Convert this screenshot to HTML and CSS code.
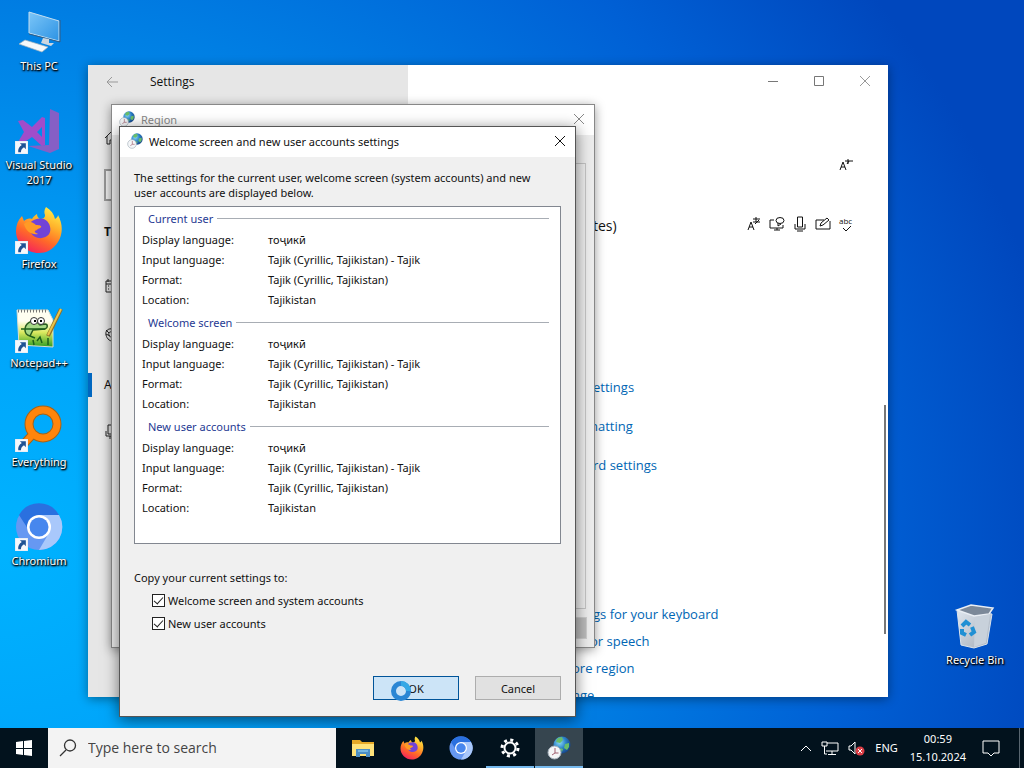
FILE: index.html
```html
<!DOCTYPE html>
<html lang="en">
<head>
<meta charset="utf-8">
<title>Desktop</title>
<link rel="stylesheet" href="styles.css">
</head>
<body>
<svg class="defs" aria-hidden="true">
  <defs>
    <linearGradient id="screenFill" x1="0" y1="0" x2="1" y2="1"><stop offset="0" stop-color="#7cc6f8"/><stop offset="1" stop-color="#2d93e4"/></linearGradient>
    <linearGradient id="foxFill" x1=".8" y1="0" x2=".3" y2="1"><stop offset="0" stop-color="#fff04a"/><stop offset=".35" stop-color="#ffb02a"/><stop offset=".65" stop-color="#ff6a28"/><stop offset="1" stop-color="#f5205e"/></linearGradient>
    <radialGradient id="globeFill" cx=".35" cy=".35" r=".75"><stop offset="0" stop-color="#8cdcf6"/><stop offset=".5" stop-color="#2a80c8"/><stop offset="1" stop-color="#123a7c"/></radialGradient>
    <linearGradient id="binFill" x1="0" y1="0" x2="1" y2="1"><stop offset="0" stop-color="#dfe6ee"/><stop offset="1" stop-color="#a3acb8"/></linearGradient>
    <linearGradient id="grassFill" x1="0" y1="0" x2="0" y2="1"><stop offset=".3" stop-color="#fffef0"/><stop offset=".6" stop-color="#dcea60"/><stop offset="1" stop-color="#2f9d23"/></linearGradient>
    <symbol id="shortcut" viewBox="0 0 12 12"><path fill="#f6f8fc" stroke="#c8d4e4" stroke-width=".5" d="M0 0h12v12H0z"/><path fill="#1f5294" d="M4.500 2H10v5.500L8.300 5.800C6.500 7 5.500 8.200 5.500 10.300H3C2.500 7.500 4 5.200 6.300 3.800z"/></symbol>
    <symbol id="firefox" viewBox="0 0 48 48"><path fill="url(#foxFill)" d="M31 1c5 3 8 7 9 12 2-1 3-3 3-4 5 9 5 19 0 27C38 44 31 47 24 47 11 47 1 37 1 25c0-6 2-11 6-15l2 5c2-2 5-3 8-2 1-2 3-4 5-5 0 2 1 4 3 5 3 0 5-1 5-4-1-2-1-5 1-8z"/><path fill="#7143d7" d="M15 17c4-5 13-6 17-2s5 12 0 15c-6 4-13 2-16-3l6-3c2-2 0-4-3-4l-5 1z"/><path fill="#ff9b25" d="M9 18c4-4 9-2 12 1 4 0 6 1 5 2-1 2-5 2-6 3-1 2 1 3 3 4-6 1-12-2-14-10z"/></symbol>
    <symbol id="chromium" viewBox="0 0 48 48"><circle cx="24" cy="24" r="23" fill="#6698f2"/><path fill="#2a70df" d="M4 12a23 23 0 0 1 40 0H24L15 29z"/><path fill="#a9c8fb" d="M24 12h20a23 23 0 0 1-20 35l10-17z"/><circle cx="24" cy="24" r="12" fill="#fff"/><circle cx="24" cy="24" r="9.500" fill="#4787ee"/></symbol>
    <symbol id="region" viewBox="0 0 24 24"><circle cx="15" cy="9" r="8.500" fill="url(#globeFill)"/><path fill="#69bd6a" d="M11 2l4-1 1 3-3 3-4-1 1-3zM18 8l4-1 0 4-2 3-3-2zM13 12l3 1-1 3z"/><circle cx="7.500" cy="16.500" r="6.500" fill="#f4f6f8" stroke="#a8b3bd"/><path fill="none" stroke="#a06070" d="M8 12v5h3.500M5 19l3-2"/></symbol>
  </defs>
</svg>
<main class="desktop">
  <nav class="shortcuts" aria-label="Desktop shortcuts">
    <a class="shortcut" href="#"><svg class="big" viewBox="0 0 48 48"><path fill="url(#screenFill)" stroke="#c4def0" stroke-width="1" d="M14 4l30 9v20L14 25z"/><path fill="none" stroke="#345d84" d="M45 12v22L14 26"/><path fill="#cbd6df" d="M28 30l6 1v4h5l-3 3-10-3z"/><path fill="#f4f8fa" stroke="#9db0bd" stroke-width=".7" d="M10 32l23 7-6 5-23-8z"/></svg><span>This PC</span></a>
    <a class="shortcut" href="#"><svg class="big" viewBox="0 0 48 48"><path fill="#865fc5" d="M35 2l9 4v36l-9 4-22-7 21-1z"/><path fill="#a04dca" fill-rule="evenodd" d="M3 14l5-1 9 7L27 10l3 1v27l-3 1-10-9-9 6-5-1 6-10zm24 6l-5 5 5 5z"/><use href="#shortcut" x="0" y="34" width="13" height="13"/></svg><span>Visual Studio 2017</span></a>
    <a class="shortcut" href="#"><svg class="big" viewBox="0 0 48 48"><use href="#firefox" width="48" height="48"/><use href="#shortcut" x="0" y="35" width="13" height="13"/></svg><span>Firefox</span></a>
    <a class="shortcut" href="#"><svg class="big" viewBox="0 0 48 48"><path fill="url(#grassFill)" stroke="#d9ddd0" d="M2 5h31l5 10v27L4 40z"/><path fill="none" stroke="#777" stroke-dasharray="1 2" stroke-width="3" d="M3 6h29"/><path fill="#a5d887" stroke="#285d20" stroke-width="1.500" d="M10 25c0-7 6-10 12-8l3 3 5-1c3 0 3 4 0 5l-12 1-3 6c-4-1-5-3-5-6z"/><path fill="none" stroke="#1b601b" stroke-width="1.500" d="M6 24h24M15 31l5 2M22 36l3-4 2 6M19 40l-1-5M33 40v-7"/><circle cx="19" cy="16" r="3.500" fill="#fff" stroke="#333"/><circle cx="26" cy="16" r="3.500" fill="#fff" stroke="#333"/><path d="M19 15h2v2h-2zM25 15h2v2h-2z"/><path stroke="#92702a" stroke-width="4" d="M33 31L46 4"/><path stroke="#e9c64d" stroke-width="2" d="M33 30L46 4"/><use href="#shortcut" x="0" y="35" width="13" height="13"/></svg><span>Notepad++</span></a>
    <a class="shortcut" href="#"><svg class="big" viewBox="0 0 48 48"><path stroke="#a36319" stroke-width="9" d="M18 30L6 43"/><circle cx="28" cy="20" r="14" fill="none" stroke="#a36319" stroke-width="9"/><path stroke="#ff850b" stroke-width="7" d="M19 29L7 42"/><circle cx="28" cy="20" r="14" fill="none" stroke="#ff850b" stroke-width="7"/><use href="#shortcut" x="0" y="35" width="13" height="13"/></svg><span>Everything</span></a>
    <a class="shortcut" href="#"><svg class="big" viewBox="0 0 48 48"><use href="#chromium" width="48" height="48"/><use href="#shortcut" x="0" y="35" width="13" height="13"/></svg><span>Chromium</span></a>
  </nav>
  <a class="shortcut bin" href="#"><svg class="big" viewBox="0 0 48 48"><path fill="url(#binFill)" stroke="#dce4ec" d="M6 8l35 4-5 30-13 4-13-3z"/><path fill="#7c8999" stroke="#e9eef4" stroke-width="1.500" d="M6 8l14-5 22 3-4 6-15 2z"/><path fill="#c8d1db" d="M24 15l15-3-4 29-12 4z"/><path fill="none" stroke="#2090d4" stroke-width="4" d="M11 24l4-4 4 3M21 25l2 5-4 3M15 33l-4-2v-4"/></svg><span>Recycle Bin</span></a>

  <section class="window settings" aria-label="Settings">
    <aside class="side">
      <header class="side-head"><button class="plain" aria-label="Back"><svg width="12" height="12" viewBox="0 0 12 12"><path d="M12 6H1M6 1L1 6l5 5" fill="none" stroke="#999"/></svg></button><span>Settings</span></header>
      <nav class="side-nav" aria-label="Settings sections">
        <svg width="14" height="16" viewBox="0 0 14 16"><path d="M1 8l6-6 6 6M3 6v8h3v-4h3v4h3V6"/></svg>
        <input class="find" type="text" aria-label="Find a setting">
        <b>T</b>
        <svg width="14" height="16" viewBox="0 0 14 16"><path d="M2 3h11v11H2zM2 6h11M4 1v3M9 1v3M4 8h1m2 0h1M4 11h1m2 0h1"/></svg>
        <svg width="14" height="16" viewBox="0 0 14 16"><path d="M9 2C4 1 1 4 2 8s4 7 9 6M9 5C6 4 4 6 5 8s3 4 6 3M2 3l3 3M2 7l4 2"/></svg>
        <span class="current">A</span>
        <svg width="14" height="16" viewBox="0 0 14 16"><path d="M4 1h5v9H4zM2 7v5h9V7M6 12v3"/></svg>
      </nav>
    </aside>
    <div class="pane">
      <div class="caption">
        <button class="plain" aria-label="Minimize"><svg width="12" height="12" viewBox="0 0 12 12"><path d="M1 6.500h10" stroke="#777"/></svg></button>
        <button class="plain" aria-label="Maximize"><svg width="12" height="12" viewBox="0 0 12 12"><path d="M1.500 1.500h9v9h-9z" fill="none" stroke="#777"/></svg></button>
        <button class="plain" aria-label="Close"><svg width="12" height="12" viewBox="0 0 12 12"><path d="M1 1l10 10M11 1L1 11" stroke="#999"/></svg></button>
      </div>
      <div class="features top"><svg width="14" height="14" viewBox="0 0 14 14"><path d="M1 12L4 4l3 8M2 9h4M6 3h8M9 1v5M8 6l2-3"/></svg></div>
      <div class="lang"><span>tes)</span>
        <div class="features">
          <svg width="14" height="14" viewBox="0 0 14 14"><path d="M1 13L4 5l3 8M2 10h4M6 2h7M9 0v5M6 5h7M8 7l4-4"/></svg>
          <svg width="16" height="14" viewBox="0 0 16 14"><path d="M5 3H1v8h13V8M5 13h6M8 11v2"/><ellipse cx="11" cy="3.500" rx="4" ry="3"/><path d="M9 6v3l3-2"/></svg>
          <svg width="14" height="16" viewBox="0 0 14 16"><path d="M4.500 1h5v10h-5zM2 8v5h10V8M4 15h6"/></svg>
          <svg width="16" height="14" viewBox="0 0 16 14"><path d="M9 3H1v9h14V4M5 9l1-3 6-5 2 2-6 5z"/></svg>
          <svg width="14" height="16" viewBox="0 0 14 16"><text x="0" y="8">abc</text><path d="M4 12l3 3 5-5"/></svg>
        </div>
      </div>
      <nav class="links" aria-label="Related settings"><a href="#">ettings</a><a class="tuck" href="#">natting</a><a href="#">rd settings</a></nav>
      <nav class="links help" aria-label="Help from the web"><a href="#">gs for your keyboard</a><a class="tuck" href="#">or speech</a><a class="out" href="#">ore region</a><a class="out" href="#">nge</a></nav>
      <div class="thumb"></div>
    </div>
  </section>

  <section class="window regionbox" aria-label="Region">
    <header class="title"><svg class="small"><use href="#region"/></svg><span>Region</span><button class="plain" aria-label="Close Region"><svg width="12" height="12" viewBox="0 0 12 12"><path d="M1 1l10 10M11 1L1 11" stroke="#888"/></svg></button></header>
    <div class="tab"></div>
    <div class="row"><div class="stub"></div></div>
  </section>

  <section class="window dialog" role="dialog" aria-labelledby="dialog-title">
    <header class="title"><svg class="small"><use href="#region"/></svg><span id="dialog-title">Welcome screen and new user accounts settings</span><button class="plain" aria-label="Close"><svg width="12" height="12" viewBox="0 0 12 12"><path d="M1 1l10 10M11 1L1 11" stroke="#111"/></svg></button></header>
    <div class="body">
      <p>The settings for the current user, welcome screen (system accounts) and new<br>user accounts are displayed below.</p>
      <div class="accounts">
        <section><h2>Current user</h2><table><tr><th>Display language:</th><td>тоҷикӣ</td></tr><tr><th>Input language:</th><td>Tajik (Cyrillic, Tajikistan) - Tajik</td></tr><tr><th>Format:</th><td>Tajik (Cyrillic, Tajikistan)</td></tr><tr><th>Location:</th><td>Tajikistan</td></tr></table></section>
        <section><h2>Welcome screen</h2><table><tr><th>Display language:</th><td>тоҷикӣ</td></tr><tr><th>Input language:</th><td>Tajik (Cyrillic, Tajikistan) - Tajik</td></tr><tr><th>Format:</th><td>Tajik (Cyrillic, Tajikistan)</td></tr><tr><th>Location:</th><td>Tajikistan</td></tr></table></section>
        <section><h2>New user accounts</h2><table><tr><th>Display language:</th><td>тоҷикӣ</td></tr><tr><th>Input language:</th><td>Tajik (Cyrillic, Tajikistan) - Tajik</td></tr><tr><th>Format:</th><td>Tajik (Cyrillic, Tajikistan)</td></tr><tr><th>Location:</th><td>Tajikistan</td></tr></table></section>
      </div>
      <div class="copy">
        <p>Copy your current settings to:</p>
        <label><input type="checkbox" checked><span>Welcome screen and system accounts</span></label>
        <label><input type="checkbox" checked><span>New user accounts</span></label>
      </div>
      <footer><button class="btn default">OK<svg class="busy" width="22" height="22" viewBox="0 0 22 22"><circle cx="11" cy="11" r="7.500" fill="none" stroke="#2a86d4" stroke-width="5"/><path d="M11 3.500a7.500 7.500 0 0 1 7.500 7.500" fill="none" stroke="#35a9e6" stroke-width="5"/></svg></button><button class="btn">Cancel</button></footer>
    </div>
  </section>
</main>
<footer class="taskbar">
  <button class="start" aria-label="Start"><svg width="16" height="16" viewBox="0 0 16 16"><path fill="#fff" d="M0 2l7-1v7H0zM8 1l8-1v8H8zM0 9h7v6l-7-1zM8 9h8v7l-8-1z"/></svg></button>
  <label class="search"><svg width="18" height="18" viewBox="0 0 18 18"><circle cx="11" cy="6.500" r="5.500" fill="none" stroke="#333" stroke-width="1.300"/><path d="M7 11l-6 6" stroke="#333" stroke-width="1.300"/></svg><input type="text" placeholder="Type here to search" aria-label="Type here to search"></label>
  <div class="apps">
    <button aria-label="File Explorer"><svg class="app" viewBox="0 0 24 24"><path fill="#e6a928" d="M1 4h8l2 2h12v14H1z"/><path fill="#ffe27a" d="M1 8h22v12H1z"/><path fill="#4d8fc4" d="M5 13h14v8h-4v-3H9v3H5z"/><path fill="#77b8e2" d="M7 14h10v2H7z"/></svg></button>
    <button aria-label="Firefox"><svg class="app"><use href="#firefox"/></svg></button>
    <button aria-label="Chromium"><svg class="app"><use href="#chromium"/></svg></button>
    <button class="open" aria-label="Settings"><svg class="app" viewBox="0 0 24 24"><g fill="none" stroke="#fff"><circle cx="12" cy="12" r="5.500" stroke-width="2"/><circle cx="12" cy="12" r="8" stroke-width="3" stroke-dasharray="3 3.283"/></g></svg></button>
    <button class="open active" aria-label="Region"><svg class="app"><use href="#region"/></svg></button>
  </div>
  <div class="tray">
    <svg width="12" height="16" viewBox="0 0 12 16"><path d="M1 11l5-5 5 5"/></svg>
    <svg width="18" height="16" viewBox="0 0 18 16"><path d="M6 3h11v8H5M11 11v3M7 14.500h8M1 2h5v4H1zM3.500 6v8H6"/></svg>
    <svg width="18" height="16" viewBox="0 0 18 16"><path d="M1 6h2l4-4v12l-4-4H1z"/><circle cx="12" cy="11" r="4.500" fill="#da3e46" stroke="none"/><path d="M10 9l4 4M14 9l-4 4"/></svg>
    <span>ENG</span>
    <time>00:59<br>15.10.2024</time>
    <svg width="18" height="18" viewBox="0 0 18 18"><path d="M1 2h16v12h-5l-3 3-3-3H1z"/></svg>
    <i class="peek"></i>
  </div>
</footer>
</body>
</html>
```
FILE: styles.css
```css
* { box-sizing: border-box; }
body {
  margin: 0;
  height: 100vh;
  display: flex;
  flex-direction: column;
  overflow: hidden;
  color: #111;
  font: 11px/15px "Noto Sans", "Open Sans", sans-serif;
}
p, h2 { margin: 0; }
button, input { font: inherit; color: inherit; }
svg { flex: none; }
.defs { position: absolute; width: 0; height: 0; }
.plain { display: flex; padding: 0; border: 0; background: none; }
.desktop {
  flex: 1;
  position: relative;
  overflow: hidden;
  background: radial-gradient(ellipse 105% 130% at 0% 75%, #00b3ff 0%, #00a5fa 22%, #0080e4 55%, #0060d5 80%, #0047bd 100%);
}
.shortcuts { display: flex; flex-direction: column; width: 78px; padding-top: 8px; }
.shortcut {
  display: flex;
  flex-direction: column;
  align-items: center;
  height: 99px;
  gap: 2px;
  color: #fff;
  text-align: center;
  text-decoration: none;
  text-shadow: 1px 1px 2px #000, 0 1px 2px #000, 1px 1px 1px #000a;
}
.big { width: 48px; height: 48px; }
.bin { position: absolute; right: 10px; bottom: 27px; width: 78px; }

.window { position: absolute; box-shadow: 0 2px 10px #0006; }
.settings { inset: 65px 136px 31px 88px; display: flex; background: #fff; overflow: hidden; }
.side { width: 320px; background: #e6e6e6; }
.side-head { display: flex; align-items: center; gap: 32px; height: 33px; padding-left: 18px; font: 12px/15px "Open Sans", sans-serif; }
.side-nav { display: grid; grid-template-rows: 80px 14px 78px 32px 66px 32px 64px; padding-left: 16px; align-items: center; }
.side-nav svg { fill: none; stroke: #222; }
.side-nav b { font-size: 12px; }
.find { width: 280px; height: 32px; border: 2px solid #999; background: #f2f2f2; }
.current { position: relative; font-size: 12px; }
.current::before { content: ""; position: absolute; left: -16px; top: -4px; width: 4px; height: 24px; background: #0067c0; }
.pane { flex: 1; position: relative; padding-left: 185px; font: 14px/20px "Open Sans", "Noto Sans", sans-serif; }
.caption { display: flex; justify-content: flex-end; gap: 34px; padding: 10px 17px 0 0; }
.features { display: flex; align-items: center; justify-content: flex-end; gap: 8px; }
.features svg { fill: none; stroke: #111; overflow: visible; }
.features text { fill: #111; stroke: none; font-size: 8px; }
.top { padding: 71px 35px 0 0; }
.lang { display: flex; justify-content: space-between; padding: 44px 35px 0 0; }
.lang .features { align-self: flex-start; }
.links { display: flex; flex-direction: column; align-items: flex-start; gap: 19px; padding-top: 141px; }
.help { gap: 7px; padding-top: 129px; }
.links a { color: #0066b4; text-decoration: none; font-size: 13px; }
.links .tuck { margin-left: -3px; }
.links .out { margin-left: -21px; }
.thumb { position: absolute; right: 2px; top: 340px; bottom: 63px; width: 2px; background: #777; }

.title { display: flex; align-items: center; gap: 6px; height: 30px; padding: 0 9px 2px 7px; background: #fff; }
.title .plain { margin-left: auto; }
.small { width: 16px; height: 16px; }
.regionbox { left: 111px; top: 104px; width: 484px; bottom: 80px; display: flex; flex-direction: column; border: 1px solid #888; background: #ececec; color: #888; }
.tab { flex: 1; margin: 28px 8px 8px; border: 1px solid #c4c4c4; background: #eee; }
.row { display: flex; justify-content: flex-end; padding: 0 7px 8px; }
.stub { width: 75px; height: 22px; background: #bbb; border: 1px solid #ccc; }
.dialog { left: 119px; top: 126px; width: 457px; border: 1px solid #555; background: #f0f0f0; box-shadow: 0 3px 14px #0008; }
.body { padding: 13px 14px 16px; }
.accounts { display: flex; flex-direction: column; gap: 2px; height: 338px; margin-top: 6px; padding: 0 11px 0 7px; border: 1px solid #828790; background: #fff; }
h2 { display: flex; align-items: center; gap: 4px; height: 22px; padding-left: 6px; color: #1f3a93; font: inherit; }
h2::after { content: ""; flex: 1; height: 1px; background: #a8adb4; }
table { border-collapse: collapse; }
th, td { height: 20px; padding: 0; text-align: left; font-weight: normal; }
th { width: 126px; }
.copy { display: flex; flex-direction: column; align-items: flex-start; gap: 8px; padding-top: 26px; }
.copy label { display: flex; align-items: center; gap: 3px; padding-left: 18px; }
.copy input { appearance: none; position: relative; width: 13px; height: 13px; margin: 0; border: 1px solid #222; background: #fff; }
.copy input::after { content: ""; position: absolute; left: 3px; top: 0; width: 4px; height: 8px; border: solid #222; border-width: 0 1px 1px 0; transform: rotate(42deg); }
.dialog footer { display: flex; justify-content: flex-end; gap: 16px; padding-top: 45px; }
.btn { position: relative; width: 86px; height: 24px; padding: 0; border: 1px solid #adadad; background: #e1e1e1; }
.default { border-color: #005499; background: #cce4f7; }
.busy { position: absolute; left: 16px; top: 3px; }

.taskbar { display: flex; height: 40px; background: #02121d; color: #fff; }
.taskbar button { display: flex; align-items: center; justify-content: center; width: 48px; padding: 0; border: 0; background: none; }
.search { display: flex; align-items: center; gap: 11px; width: 288px; padding-left: 11px; background: #f3f3f3; }
.search input { flex: 1; min-width: 0; padding: 0; border: 0; background: none; font: 14px/20px "Open Sans", sans-serif; }
.search input::placeholder { color: #444; opacity: 1; }
.apps { display: flex; gap: 1px; padding-left: 3px; }
.app { width: 24px; height: 24px; }
.taskbar .open { border-bottom: 2px solid #76b9ed; padding-top: 2px; }
.taskbar .active { background: #36454f; }
.tray { display: flex; align-items: center; gap: 9px; margin-left: auto; text-align: center; line-height: 18px; }
.tray svg { fill: none; stroke: #fff; }
.tray time { padding: 0 7px 0 3px; }
.peek { width: 5px; height: 40px; margin-left: 10px; border-left: 1px solid #596670; }
```
